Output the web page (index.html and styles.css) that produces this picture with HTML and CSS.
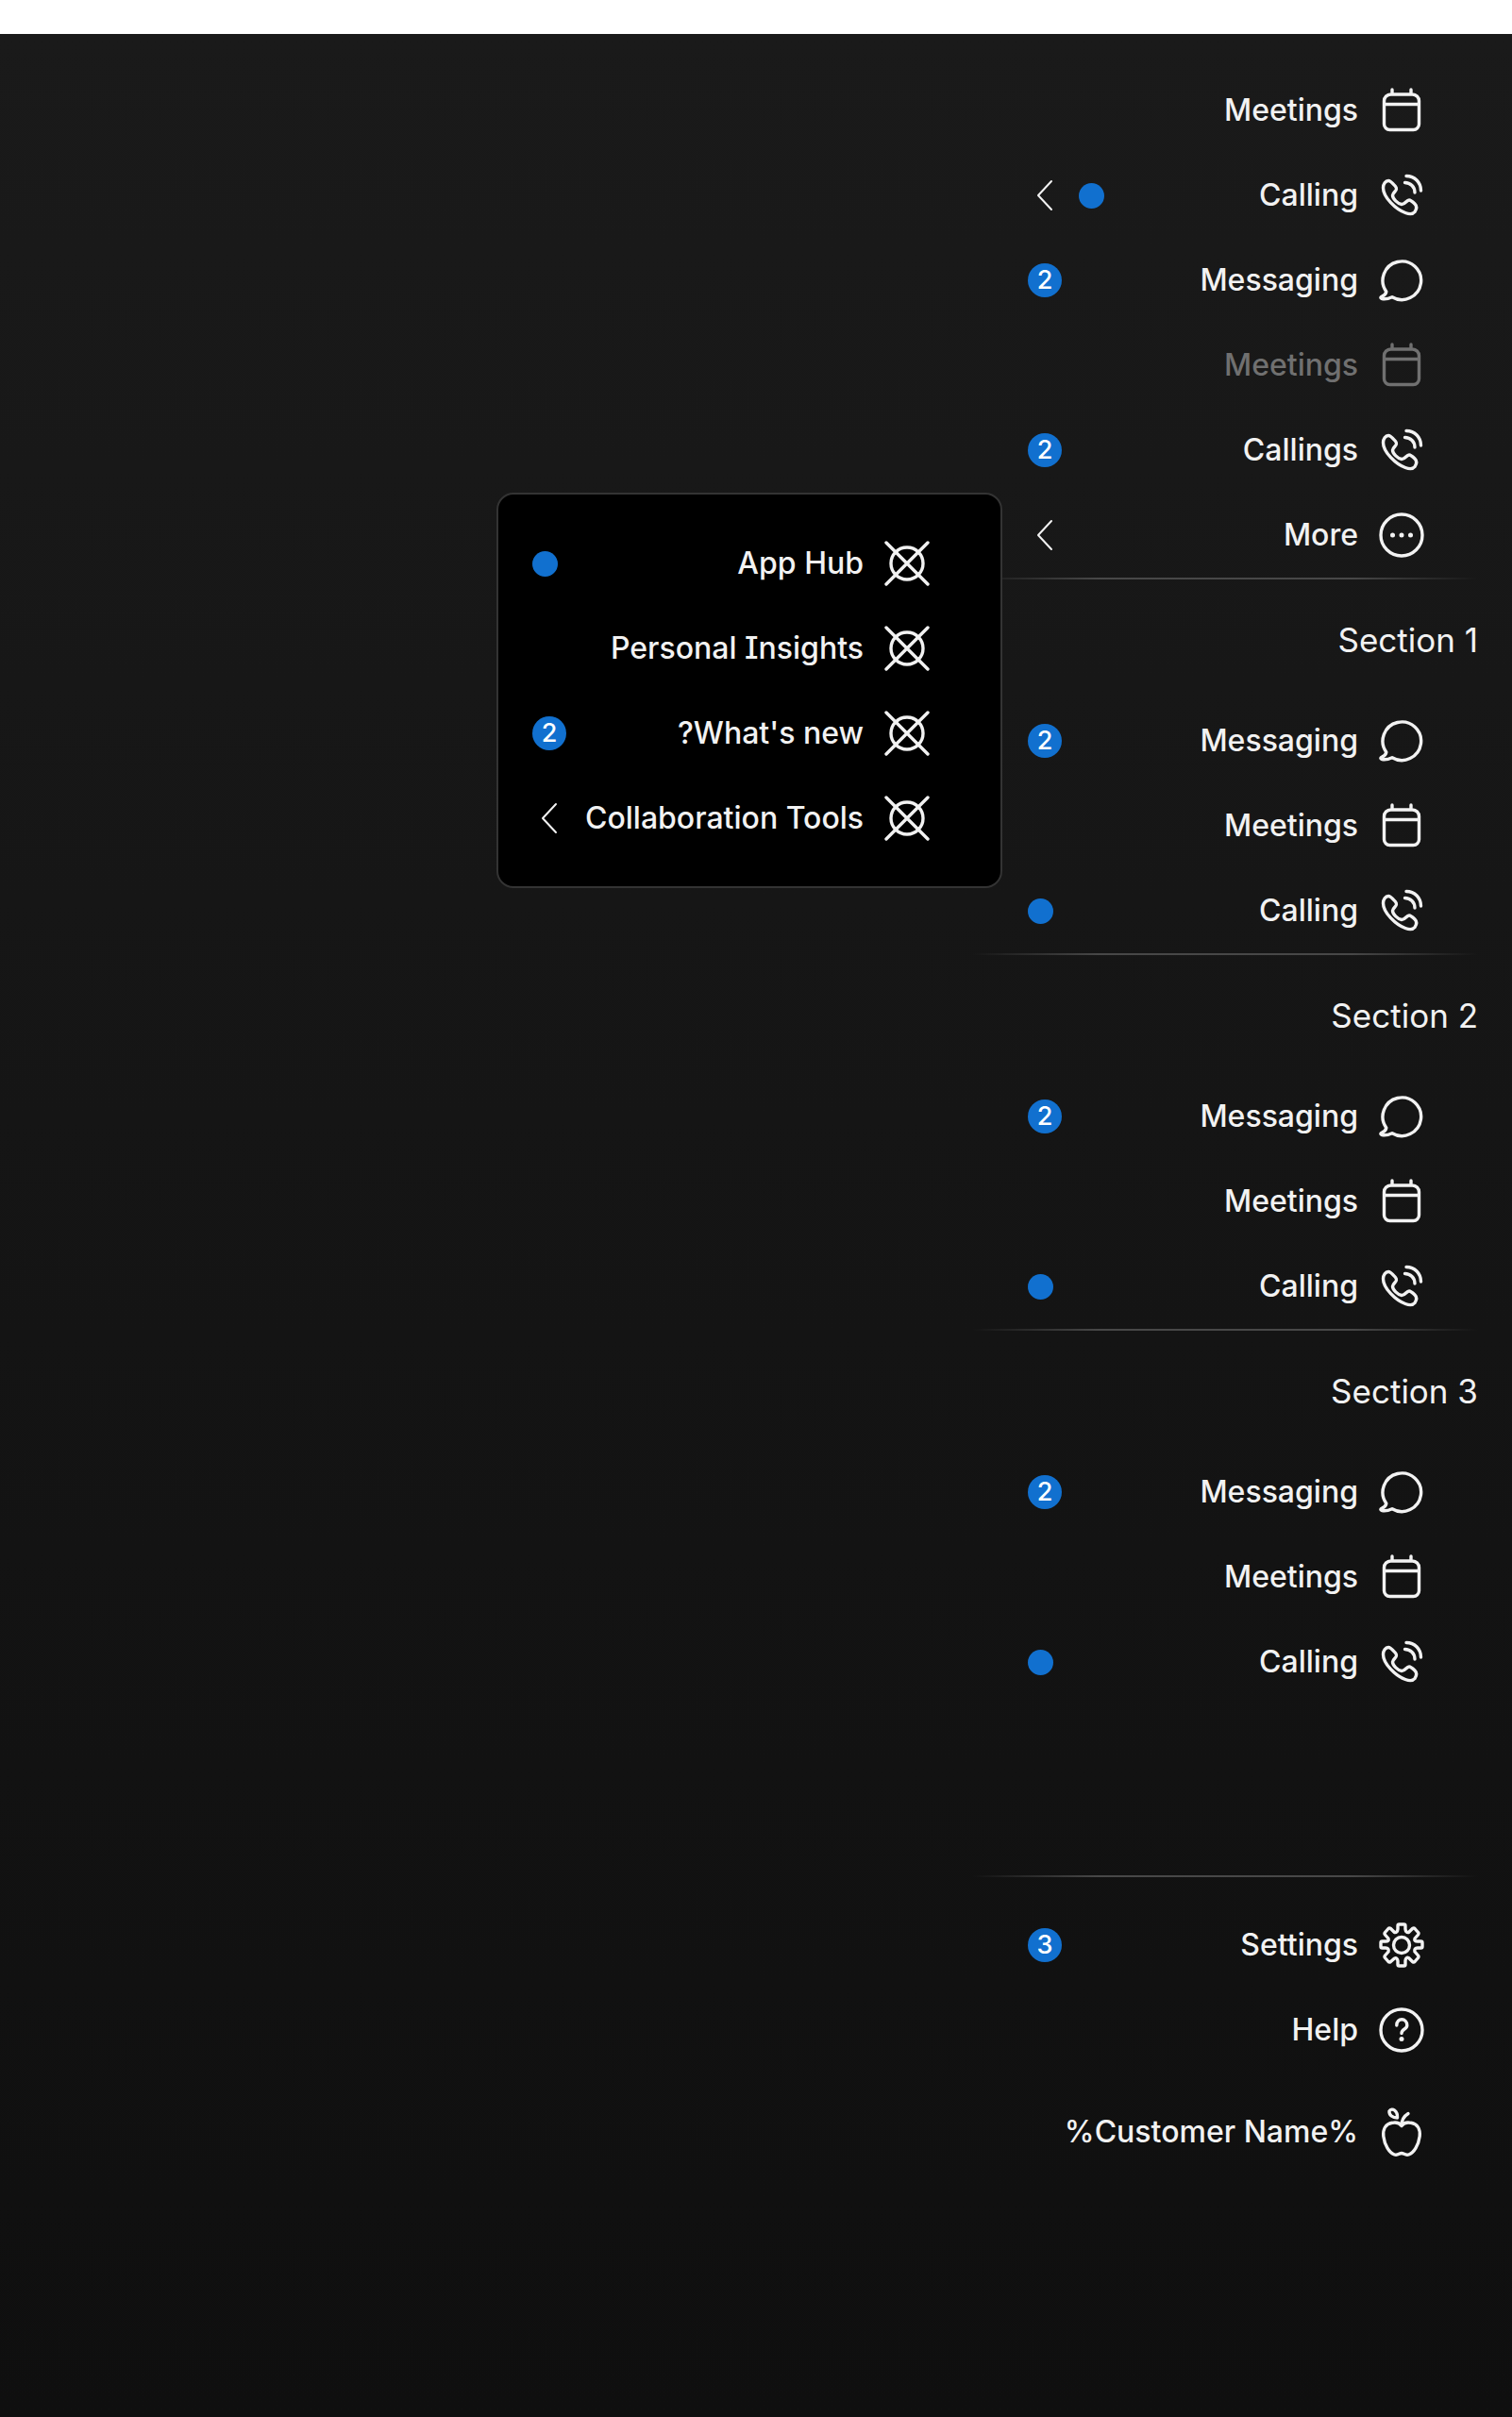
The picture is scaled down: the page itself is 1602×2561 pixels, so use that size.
FILE: index.html
```
<!DOCTYPE html>
<html lang="en" dir="rtl">
<head>
<meta charset="utf-8">
<title>Side navigation</title>
<link rel="stylesheet" href="styles.css">
</head>
<body>
<svg class="sprite" aria-hidden="true">
  <symbol id="calendar" viewBox="0 0 48 48" stroke-width="3.4"><path d="M14 2v4.500M34 2v4.500M5.500 17.500h37M12.500 7h23a7 7 0 0 1 7 7v24.500a6 6 0 0 1-6 6h-25a6 6 0 0 1-6-6V14a7 7 0 0 1 7-7Z"/></symbol>
  <symbol id="call" viewBox="0 0 48 48" stroke-width="3.4"><path d="M4.500 16C4.500 12 7 8.500 10 8.500c2.500 0 4 2 7.500 6 3.500 4.500-2.500 5.500-3 9.500 0 3.500 5.500 9 9.500 9.500 4 .2 5-4.500 8-4.500 2 0 3.500 1.500 6 4 3 3 2 5.500 0 8.500-2 2.500-6 2.500-10 1C18 39 4.500 26 4.500 16Z"/><path d="M29 3.500c9 0 15.500 7 15.500 15.500M27.500 10.500c6 0 10.500 4.500 10.500 10.500"/></symbol>
  <symbol id="chat" viewBox="0 0 48 48" stroke-width="3.4"><path d="M7.800 36A20.300 20.300 0 1 1 14 41.700c-4 1.800-8 2.600-11.200 1.600-1.500-.6-1-1.600.4-2.200 2.800-1.300 4.300-2.600 4.600-5.100Z"/></symbol>
  <symbol id="more" viewBox="0 0 48 48" stroke-width="3.4"><circle cx="24" cy="24" r="22"/><path class="dots" d="M14.500 24h.01M24 24h.01M33.500 24h.01"/></symbol>
  <symbol id="placeholder" viewBox="0 0 48 48" stroke-width="3.4"><circle cx="24" cy="24" r="17"/><path d="M2 2l44 44M46 2 2 46"/></symbol>
  <symbol id="settings" viewBox="0 0 48 48" stroke-width="3.4"><circle cx="24" cy="24" r="8.500"/><path d="M20 3.500q0-1.500 1.500-1.500h5Q28 2 28 3.500V7q.5 4 3.500 3.500l4-4q1.500-1 2.500 0l3.500 4q1 1 0 2.500l-3.500 4q-1 3 3 3h3.500q1.500 0 1.500 1.500v4q0 1.500-1.500 1.500H41q-4 0-3 4l3.500 4q1 1.500 0 2.500l-3.500 4q-1 1-2.500 0l-4-4q-3-1-3.500 3v4q0 1.500-1.500 1.500h-5Q20 46 20 44.500V41q-.5-4-3.500-3l-4 3.500q-1.500 1-2.500 0l-3.500-4q-1-1 0-2.500l3.500-4q1-4-3-4H3.500Q2 27 2 25.500v-4Q2 20 3.500 20H7q4 0 3-3l-3.500-4q-1-1 0-2.500l3.500-4q1-1 2.500 0l4 4Q19.500 11 20 7Z"/></symbol>
  <symbol id="help" viewBox="0 0 48 48" stroke-width="3.4"><circle cx="24" cy="24" r="22"/><path d="M18.800 19c0-8.500 11-8 11 0 0 4.500-5.800 3.500-5.800 8.500"/><path class="dots" d="M24 33.500h.01"/></symbol>
  <symbol id="apple" viewBox="0 0 48 56" stroke-width="3.4"><path d="M24 21.500c-2-3-6-4-10-3.200C7 19.500 4 25 4.800 32.500 6 42 11 50 16.500 52c3.500 1.200 5-1.500 7.500-1.500s4 2.700 7.500 1.500C37 50 42 42 43.200 32.500 44 25 41 19.500 34 18.300c-4-.8-8 .2-10 3.200ZM24 21.500c0-5.500 2-10 7-13M19.500 13c-5 0-9-3-8.500-7C14 1.500 20 5.500 19.500 13Z"/></symbol>
  <symbol id="arrow" viewBox="0 0 36 36"><path d="M25 3 11 18l14 15"/></symbol>
</svg>
<nav class="sidenav">
  <div class="scroll">
    <ul class="list">
      <li><a class="item" href="#"><svg class="icon"><use href="#calendar"/></svg><span class="label">Meetings</span></a></li>
      <li><a class="item" href="#"><svg class="icon"><use href="#call"/></svg><span class="label">Calling</span><span class="dot"></span><svg class="arrow"><use href="#arrow"/></svg></a></li>
      <li><a class="item" href="#"><svg class="icon"><use href="#chat"/></svg><span class="label">Messaging</span><span class="badge">2</span></a></li>
      <li><a class="item disabled" aria-disabled="true"><svg class="icon"><use href="#calendar"/></svg><span class="label">Meetings</span></a></li>
      <li><a class="item" href="#"><svg class="icon"><use href="#call"/></svg><span class="label">Callings</span><span class="badge">2</span></a></li>
      <li class="anchor"><button class="item" type="button" aria-expanded="true"><svg class="icon"><use href="#more"/></svg><span class="label">More</span><svg class="arrow"><use href="#arrow"/></svg></button>
        <ul class="flyout">
          <li><a class="item" href="#"><svg class="icon"><use href="#placeholder"/></svg><span class="label">App Hub</span><span class="dot"></span></a></li>
          <li><a class="item" href="#"><svg class="icon"><use href="#placeholder"/></svg><span class="label">Personal Insights</span></a></li>
          <li><a class="item" href="#"><svg class="icon"><use href="#placeholder"/></svg><span class="label">What's new?</span><span class="badge">2</span></a></li>
          <li><a class="item" href="#"><svg class="icon"><use href="#placeholder"/></svg><span class="label">Collaboration Tools</span><svg class="arrow"><use href="#arrow"/></svg></a></li>
        </ul>
      </li>
    </ul>
    <section class="group">
      <h2 class="heading">Section 1</h2>
      <ul class="list">
        <li><a class="item" href="#"><svg class="icon"><use href="#chat"/></svg><span class="label">Messaging</span><span class="badge">2</span></a></li>
        <li><a class="item" href="#"><svg class="icon"><use href="#calendar"/></svg><span class="label">Meetings</span></a></li>
        <li><a class="item" href="#"><svg class="icon"><use href="#call"/></svg><span class="label">Calling</span><span class="dot"></span></a></li>
      </ul>
    </section>
    <section class="group">
      <h2 class="heading">Section 2</h2>
      <ul class="list">
        <li><a class="item" href="#"><svg class="icon"><use href="#chat"/></svg><span class="label">Messaging</span><span class="badge">2</span></a></li>
        <li><a class="item" href="#"><svg class="icon"><use href="#calendar"/></svg><span class="label">Meetings</span></a></li>
        <li><a class="item" href="#"><svg class="icon"><use href="#call"/></svg><span class="label">Calling</span><span class="dot"></span></a></li>
      </ul>
    </section>
    <section class="group">
      <h2 class="heading">Section 3</h2>
      <ul class="list">
        <li><a class="item" href="#"><svg class="icon"><use href="#chat"/></svg><span class="label">Messaging</span><span class="badge">2</span></a></li>
        <li><a class="item" href="#"><svg class="icon"><use href="#calendar"/></svg><span class="label">Meetings</span></a></li>
        <li><a class="item" href="#"><svg class="icon"><use href="#call"/></svg><span class="label">Calling</span><span class="dot"></span></a></li>
      </ul>
    </section>
  </div>
  <div class="fixed">
    <ul class="list">
      <li><a class="item" href="#"><svg class="icon"><use href="#settings"/></svg><span class="label">Settings</span><span class="badge">3</span></a></li>
      <li><a class="item" href="#"><svg class="icon"><use href="#help"/></svg><span class="label">Help</span></a></li>
    </ul>
    <div class="brand item"><svg class="icon tall"><use href="#apple"/></svg><span class="label" dir="ltr">%Customer Name%</span></div>
  </div>
</nav>
</body>
</html>
```
FILE: styles.css
```
* { box-sizing: border-box; }

body {
  margin: 0;
  padding-top: 36px;
  background: #fff;
  color: #f2f2f2;
  font-family: Inter, "Liberation Sans", sans-serif;
  font-feature-settings: "cv08";
  font-size: 32px;
  line-height: 48px;
  min-height: 100vh;
  display: flex;
}

ul { list-style: none; margin: 0; padding: 0; }

.sprite { position: absolute; width: 0; height: 0; }

.sidenav {
  flex: 1;
  display: flex;
  flex-direction: column;
  align-items: flex-start;
  padding: 36px 36px 257px 0;
  background: linear-gradient(#1a1a1a, #0f0f0f);
}

.scroll, .fixed { width: 536px; }

.scroll { flex: 1; }

.anchor { position: relative; }

.item {
  display: flex;
  align-items: center;
  width: 100%;
  height: 90px;
  gap: 18px;
  margin: 0;
  padding: 0 57px 0 59px;
  border: 0;
  background: none;
  color: inherit;
  font: inherit;
  font-feature-settings: inherit;
  font-weight: 500;
  text-decoration: none;
  white-space: nowrap;
}

.disabled { color: #707070; }

.label { flex: 1; text-align: right; }

.icon, .arrow {
  flex: none;
  width: 48px;
  height: 48px;
  fill: none;
  stroke: currentColor;
  stroke-linecap: round;
  stroke-linejoin: round;
}

.icon { margin-left: 4px; }

.icon.tall { height: 56px; }

.arrow { width: 36px; height: 36px; stroke-width: 2px; }

.dots { stroke-width: 5px; }

.dot {
  width: 27px;
  height: 27px;
  border-radius: 50%;
  background: #1170cf;
}

.badge {
  width: 36px;
  height: 36px;
  border-radius: 50%;
  background: #1170cf;
  color: #fff;
  font-size: 27px;
  line-height: 36px;
  text-align: center;
}

.group::before, .fixed::before {
  content: "";
  display: block;
  height: 2px;
  background: linear-gradient(90deg, transparent, #484848 25%, #484848 75%, transparent);
}

.heading {
  margin: 0;
  padding: 40px 0 38px;
  font-size: 35px;
  font-weight: 400;
  line-height: 48px;
}

.fixed .list { padding-top: 27px; }

.brand { margin-top: 18px; }

.flyout {
  position: absolute;
  top: 0;
  right: calc(100% - 32px);
  z-index: 1;
  width: 536px;
  padding: 28px 18px 27px 0;
  border: 2px solid #333;
  border-radius: 18px;
  background: #000;
}

.flyout .item { padding-left: 36px; }
```
